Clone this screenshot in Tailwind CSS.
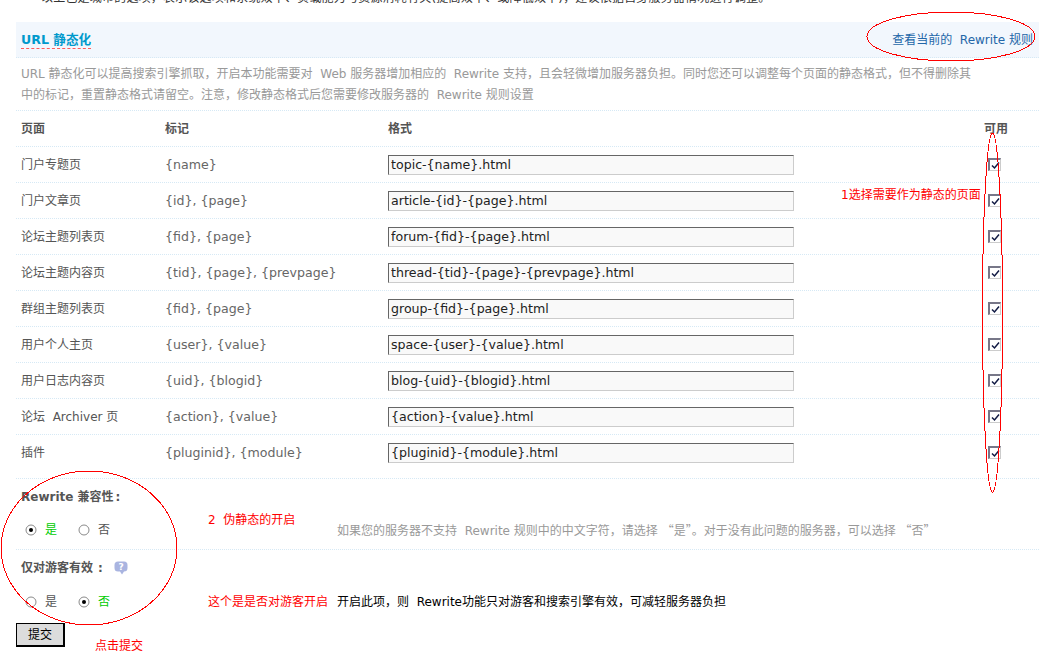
<!DOCTYPE html>
<html lang="zh-CN">
<head>
  <meta charset="UTF-8" />
  <meta name="viewport" content="width=device-width, initial-scale=1" />
  <title>URL 静态化</title>
  <script src="https://cdn.jsdelivr.net/npm/@tailwindcss/browser@4"></script>
</head>
<body class="bg-white">
<div class="relative h-[659px] w-[1053px] overflow-hidden pl-4 pr-[14px] text-[12px] leading-[16px] text-[#555] font-['DejaVu_Sans','Noto_Sans_CJK_SC',sans-serif]">

  <!-- line at the very top, only the lower half shows -->
  <div class="h-[22px] overflow-hidden pl-[25px]">
    <p class="-mt-[10px] whitespace-nowrap tracking-[0.2px] text-[#333]">以上已是城市的选项，表示该选项和系统效率、负载能力与资源消耗有关(提高效率、或降低效率)，建议依据自身服务器情况进行调整。</p>
  </div>

  <!-- title -->
  <div class="flex h-[36px] items-center justify-between border-b border-dotted border-[#d6e9f5] bg-[#f2f7fd] pl-[5px] pr-[6px]">
    <h3 class="border-b border-dashed border-[#ff5a5a] text-[12.6px] font-bold leading-[17px] text-[#0099cc]">URL 静态化</h3>
    <a href="#" class="text-[#2366a8]">查看当前的 &nbsp;Rewrite 规则</a>
  </div>

  <p class="h-[53px] border-b border-dotted border-[#d6e9f5] px-[5px] pt-[6px] leading-[21px] text-[#999] whitespace-nowrap">URL 静态化可以提高搜索引擎抓取，开启本功能需要对 &nbsp;Web 服务器增加相应的 &nbsp;Rewrite 支持，且会轻微增加服务器负担。同时您还可以调整每个页面的静态格式，但不得删除其<br />中的标记，重置静态格式请留空。注意，修改静态格式后您需要修改服务器的 &nbsp;Rewrite 规则设置</p>

  <!-- rewrite rows -->
  <div class="grid h-[36px] grid-cols-[144px_223px_596px_1fr] items-center border-b border-dotted border-[#d6e9f5] pl-[5px] font-bold">
    <span>页面</span><span>标记</span><span>格式</span><span>可用</span>
  </div>

  <div class="grid h-[36px] grid-cols-[144px_223px_596px_1fr] items-center border-b border-dotted border-[#d6e9f5] pl-[5px]">
    <span>门户专题页</span><span class="text-[12.6px] text-[#666]">{name}</span>
    <input value="topic-{name}.html" class="h-[20px] w-[406px] border border-[#ccc] border-t-[#666] border-l-[#666] bg-[#f9f9f9] px-[2px] text-[12.6px] text-[#222]" />
    <span class="ml-[4px] flex h-[13px] w-[13px] items-center justify-center border-2 border-[#777788] border-r border-b border-r-[#ccc] border-b-[#ccc] bg-white"><svg width="9" height="9" viewBox="0 0 9 9"><path d="M1 4.5 L3.5 7 L8 1.5" fill="none" stroke="#111a44" stroke-width="1.5"/></svg></span>
  </div>
  <div class="grid h-[36px] grid-cols-[144px_223px_596px_1fr] items-center border-b border-dotted border-[#d6e9f5] pl-[5px]">
    <span>门户文章页</span><span class="text-[12.6px] text-[#666]">{id}, {page}</span>
    <input value="article-{id}-{page}.html" class="h-[20px] w-[406px] border border-[#ccc] border-t-[#666] border-l-[#666] bg-[#f9f9f9] px-[2px] text-[12.6px] text-[#222]" />
    <span class="ml-[4px] flex h-[13px] w-[13px] items-center justify-center border-2 border-[#777788] border-r border-b border-r-[#ccc] border-b-[#ccc] bg-white"><svg width="9" height="9" viewBox="0 0 9 9"><path d="M1 4.5 L3.5 7 L8 1.5" fill="none" stroke="#111a44" stroke-width="1.5"/></svg></span>
  </div>
  <div class="grid h-[36px] grid-cols-[144px_223px_596px_1fr] items-center border-b border-dotted border-[#d6e9f5] pl-[5px]">
    <span>论坛主题列表页</span><span class="text-[12.6px] text-[#666]">{fid}, {page}</span>
    <input value="forum-{fid}-{page}.html" class="h-[20px] w-[406px] border border-[#ccc] border-t-[#666] border-l-[#666] bg-[#f9f9f9] px-[2px] text-[12.6px] text-[#222]" />
    <span class="ml-[4px] flex h-[13px] w-[13px] items-center justify-center border-2 border-[#777788] border-r border-b border-r-[#ccc] border-b-[#ccc] bg-white"><svg width="9" height="9" viewBox="0 0 9 9"><path d="M1 4.5 L3.5 7 L8 1.5" fill="none" stroke="#111a44" stroke-width="1.5"/></svg></span>
  </div>
  <div class="grid h-[36px] grid-cols-[144px_223px_596px_1fr] items-center border-b border-dotted border-[#d6e9f5] pl-[5px]">
    <span>论坛主题内容页</span><span class="text-[12.6px] text-[#666]">{tid}, {page}, {prevpage}</span>
    <input value="thread-{tid}-{page}-{prevpage}.html" class="h-[20px] w-[406px] border border-[#ccc] border-t-[#666] border-l-[#666] bg-[#f9f9f9] px-[2px] text-[12.6px] text-[#222]" />
    <span class="ml-[4px] flex h-[13px] w-[13px] items-center justify-center border-2 border-[#777788] border-r border-b border-r-[#ccc] border-b-[#ccc] bg-white"><svg width="9" height="9" viewBox="0 0 9 9"><path d="M1 4.5 L3.5 7 L8 1.5" fill="none" stroke="#111a44" stroke-width="1.5"/></svg></span>
  </div>
  <div class="grid h-[36px] grid-cols-[144px_223px_596px_1fr] items-center border-b border-dotted border-[#d6e9f5] pl-[5px]">
    <span>群组主题列表页</span><span class="text-[12.6px] text-[#666]">{fid}, {page}</span>
    <input value="group-{fid}-{page}.html" class="h-[20px] w-[406px] border border-[#ccc] border-t-[#666] border-l-[#666] bg-[#f9f9f9] px-[2px] text-[12.6px] text-[#222]" />
    <span class="ml-[4px] flex h-[13px] w-[13px] items-center justify-center border-2 border-[#777788] border-r border-b border-r-[#ccc] border-b-[#ccc] bg-white"><svg width="9" height="9" viewBox="0 0 9 9"><path d="M1 4.5 L3.5 7 L8 1.5" fill="none" stroke="#111a44" stroke-width="1.5"/></svg></span>
  </div>
  <div class="grid h-[36px] grid-cols-[144px_223px_596px_1fr] items-center border-b border-dotted border-[#d6e9f5] pl-[5px]">
    <span>用户个人主页</span><span class="text-[12.6px] text-[#666]">{user}, {value}</span>
    <input value="space-{user}-{value}.html" class="h-[20px] w-[406px] border border-[#ccc] border-t-[#666] border-l-[#666] bg-[#f9f9f9] px-[2px] text-[12.6px] text-[#222]" />
    <span class="ml-[4px] flex h-[13px] w-[13px] items-center justify-center border-2 border-[#777788] border-r border-b border-r-[#ccc] border-b-[#ccc] bg-white"><svg width="9" height="9" viewBox="0 0 9 9"><path d="M1 4.5 L3.5 7 L8 1.5" fill="none" stroke="#111a44" stroke-width="1.5"/></svg></span>
  </div>
  <div class="grid h-[36px] grid-cols-[144px_223px_596px_1fr] items-center border-b border-dotted border-[#d6e9f5] pl-[5px]">
    <span>用户日志内容页</span><span class="text-[12.6px] text-[#666]">{uid}, {blogid}</span>
    <input value="blog-{uid}-{blogid}.html" class="h-[20px] w-[406px] border border-[#ccc] border-t-[#666] border-l-[#666] bg-[#f9f9f9] px-[2px] text-[12.6px] text-[#222]" />
    <span class="ml-[4px] flex h-[13px] w-[13px] items-center justify-center border-2 border-[#777788] border-r border-b border-r-[#ccc] border-b-[#ccc] bg-white"><svg width="9" height="9" viewBox="0 0 9 9"><path d="M1 4.5 L3.5 7 L8 1.5" fill="none" stroke="#111a44" stroke-width="1.5"/></svg></span>
  </div>
  <div class="grid h-[36px] grid-cols-[144px_223px_596px_1fr] items-center border-b border-dotted border-[#d6e9f5] pl-[5px]">
    <span>论坛 &nbsp;Archiver 页</span><span class="text-[12.6px] text-[#666]">{action}, {value}</span>
    <input value="{action}-{value}.html" class="h-[20px] w-[406px] border border-[#ccc] border-t-[#666] border-l-[#666] bg-[#f9f9f9] px-[2px] text-[12.6px] text-[#222]" />
    <span class="ml-[4px] flex h-[13px] w-[13px] items-center justify-center border-2 border-[#777788] border-r border-b border-r-[#ccc] border-b-[#ccc] bg-white"><svg width="9" height="9" viewBox="0 0 9 9"><path d="M1 4.5 L3.5 7 L8 1.5" fill="none" stroke="#111a44" stroke-width="1.5"/></svg></span>
  </div>
  <div class="grid h-[44px] grid-cols-[144px_223px_596px_1fr] items-center border-b border-dotted border-[#d6e9f5] pb-[8px] pl-[5px]">
    <span>插件</span><span class="text-[12.6px] text-[#666]">{pluginid}, {module}</span>
    <input value="{pluginid}-{module}.html" class="h-[20px] w-[406px] border border-[#ccc] border-t-[#666] border-l-[#666] bg-[#f9f9f9] px-[2px] text-[12.6px] text-[#222]" />
    <span class="ml-[4px] flex h-[13px] w-[13px] items-center justify-center border-2 border-[#777788] border-r border-b border-r-[#ccc] border-b-[#ccc] bg-white"><svg width="9" height="9" viewBox="0 0 9 9"><path d="M1 4.5 L3.5 7 L8 1.5" fill="none" stroke="#111a44" stroke-width="1.5"/></svg></span>
  </div>

  <!-- rewrite compatibility -->
  <div class="flex h-[35px] items-center pl-[5px] font-bold">Rewrite 兼容性<span class="ml-[2px]">:</span></div>
  <div class="flex h-[36px] items-center border-b border-dotted border-[#d6e9f5] pb-[3px]">
    <div class="flex w-[321px] items-center pl-[9px]">
      <svg width="12" height="12" viewBox="0 0 12 12"><circle cx="6" cy="6" r="5" fill="#fff" stroke="#8a8a8a"/><circle cx="6" cy="6" r="2" fill="#000"/></svg>
      <span class="ml-[8px] text-[#00cc00]">是</span>
      <svg class="ml-[21px]" width="12" height="12" viewBox="0 0 12 12"><circle cx="6" cy="6" r="5" fill="#fff" stroke="#8a8a8a"/></svg>
      <span class="ml-[8px]">否</span>
    </div>
    <span class="text-[#999]">如果您的服务器不支持 &nbsp;Rewrite 规则中的中文字符，请选择 <span class="font-['Noto_Sans_CJK_SC']">“是”。</span>对于没有此问题的服务器，可以选择 <span class="font-['Noto_Sans_CJK_SC']">“否”</span></span>
  </div>

  <!-- guests only -->
  <div class="flex h-[35px] items-center pl-[5px] font-bold">
    <span>仅对游客有效</span><span class="ml-[5px]">:</span>
    <svg class="ml-[11px]" width="14" height="14" viewBox="0 0 14 14"><path d="M4 0.5 H10 Q13.5 0.5 13.5 4 V7 Q13.5 10.5 10 10.5 L8 13.5 L6 10.5 H4 Q0.5 10.5 0.5 7 V4 Q0.5 0.5 4 0.5 Z" fill="#a9b4e0"/><text x="7" y="9" text-anchor="middle" font-size="9" font-weight="700" fill="#fff">?</text></svg>
  </div>
  <div class="flex h-[36px] items-center pb-[2px]">
    <div class="flex w-[321px] items-center pl-[9px]">
      <svg width="12" height="12" viewBox="0 0 12 12"><circle cx="6" cy="6" r="5" fill="#fff" stroke="#8a8a8a"/></svg>
      <span class="ml-[8px]">是</span>
      <svg class="ml-[21px]" width="12" height="12" viewBox="0 0 12 12"><circle cx="6" cy="6" r="5" fill="#fff" stroke="#8a8a8a"/><circle cx="6" cy="6" r="2" fill="#000"/></svg>
      <span class="ml-[8px] text-[#00cc00]">否</span>
    </div>
    <span class="text-black">开启此项，则 &nbsp;Rewrite功能只对游客和搜索引擎有效，可减轻服务器负担</span>
  </div>

  <button class="mt-[2px] h-[24px] w-[49px] border border-r-2 border-b-2 border-black bg-[#dcdcdc] text-black">提交</button>

  <!-- red notes drawn over the screenshot -->
  <svg class="pointer-events-none absolute top-0 left-0" width="1053" height="659" fill="none" stroke="#ff0000" shape-rendering="crispEdges">
    <ellipse cx="951" cy="36.5" rx="84" ry="24.5" />
    <ellipse cx="992.5" cy="312.5" rx="10" ry="179.5" />
    <ellipse cx="89" cy="548" rx="88" ry="77" />
  </svg>
  <span class="absolute top-[187px] left-[841px] text-[#ff0000]">1选择需要作为静态的页面</span>
  <span class="absolute top-[512px] left-[208px] text-[#ff0000]">2 &nbsp;伪静态的开启</span>
  <span class="absolute top-[594px] left-[208px] text-[#ff0000]">这个是是否对游客开启</span>
  <span class="absolute top-[638px] left-[95px] text-[#ff0000]">点击提交</span>
</div>
</body>
</html>
